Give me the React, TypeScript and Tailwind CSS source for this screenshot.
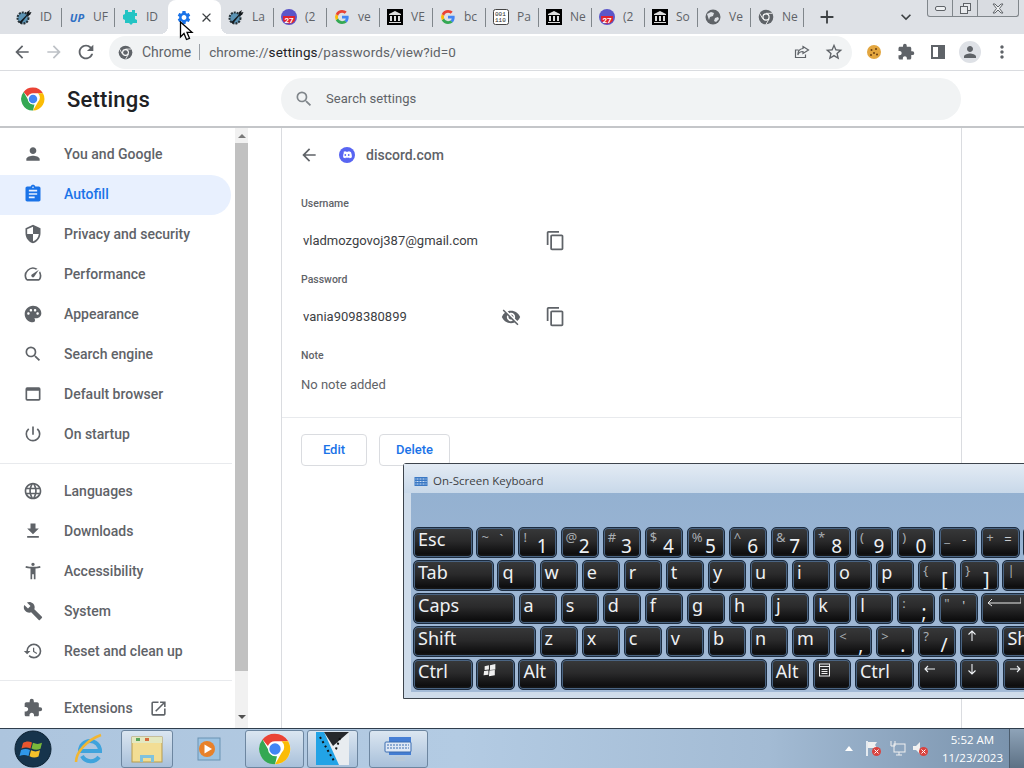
import React from "react";
import {
  MdPerson, MdAssignment, MdSecurity, MdSpeed, MdPalette, MdSearch, MdWebAsset, MdPowerSettingsNew,
  MdLanguage, MdFileDownload, MdAccessibilityNew, MdBuild, MdRestore, MdExtension, MdOpenInNew,
  MdArrowBack, MdArrowForward, MdRefresh, MdContentCopy, MdVisibilityOff, MdAdd, MdClose, MdSettings,
  MdExpandMore, MdStarBorder, MdMoreVert,
} from "react-icons/md";

function ChromeLogo({ size = 24 }: { size?: number }) {
  return (
    <svg width={size} height={size} viewBox="0 0 48 48">
      <circle cx="24" cy="24" r="23" fill="#fff" />
      <path d="M24 1a23 23 0 0 1 19.9 11.5H24a11.5 11.5 0 0 0-10.6 7L5.2 9.9A23 23 0 0 1 24 1z" fill="#ea4335" />
      <path d="M43.9 12.5A23 23 0 0 1 24 47l9.9-17.2a11.5 11.5 0 0 0 0-17.3z" fill="#fbbc05" />
      <path d="M24 47A23 23 0 0 1 5.2 9.9l9.9 17.2A11.5 11.5 0 0 0 27 35z" fill="#34a853" />
      <circle cx="24" cy="24" r="10.5" fill="#fff" />
      <circle cx="24" cy="24" r="8.5" fill="#4285f4" />
    </svg>
  );
}

function GreyChrome({ size = 16 }: { size?: number }) {
  return (
    <svg width={size} height={size} viewBox="0 0 48 48">
      <circle cx="24" cy="24" r="22" fill="#5f6368" />
      <circle cx="24" cy="24" r="11" fill="#fff" />
      <circle cx="24" cy="24" r="7.5" fill="#5f6368" />
      <path d="M24 13h19M14.5 29.500 5 13M33.500 29.500 24 46" stroke="#fff" strokeWidth="2.500" />
    </svg>
  );
}

function GoogleG() {
  return (
    <svg width="16" height="16" viewBox="0 0 48 48">
      <path d="M44 24.500c0-1.500-.1-3-.4-4.500H24v8.500h11.300c-.5 2.700-2 5-4.300 6.500l6.800 5.300C41.800 36.600 44 31 44 24.500z" fill="#4285f4" />
      <path d="M24 45c5.700 0 10.500-1.900 13.800-5.200L31 34.500c-1.900 1.300-4.300 2-7 2-5.400 0-10-3.600-11.600-8.500l-7 5.400C8.800 40.500 15.900 45 24 45z" fill="#34a853" />
      <path d="M12.400 28.500a12.600 12.600 0 0 1 0-8l-7-5.500a21 21 0 0 0 0 19z" fill="#fbbc05" />
      <path d="M24 11.500c3 0 5.800 1 8 3.100l6-6C34.400 5.200 29.600 3 24 3 15.900 3 8.800 7.600 5.400 15l7 5.500C14 15.500 18.600 11.500 24 11.500z" fill="#ea4335" />
    </svg>
  );
}

function Wrench() {
  return (
    <svg width="16" height="16" viewBox="0 0 16 16">
      <circle cx="7" cy="9" r="5.500" fill="#5b93b4" stroke="#263238" strokeWidth="2" strokeDasharray="2 1" />
      <path d="M3 13.500 10.500 6l.5-3 3-2-1 2.500 2.500-.5L14 6l-2.500.5L5 14.500z" fill="#14191d" />
    </svg>
  );
}

function Bank() {
  return (
    <svg width="16" height="16" viewBox="0 0 16 16">
      <rect width="16" height="16" fill="#000" />
      <path d="M2 5 8 2l6 3v1H2zM3 7h2v5H3zM7 7h2v5H7zM11 7h2v5h-2zM2 13h12v1H2z" fill="#ddd" />
    </svg>
  );
}

function Cal() {
  return (
    <svg width="16" height="16" viewBox="0 0 16 16">
      <circle cx="8" cy="8" r="8" fill="#5b56c9" />
      <path d="M2 7h12l-.2 5a7.500 7.500 0 0 1-11.600 0z" fill="#e0232e" />
      <text x="8" y="14" textAnchor="middle" fontSize="8" fontWeight="700" fill="#fff" fontFamily="Roboto">27</text>
    </svg>
  );
}

function Puzzle() {
  return (
    <svg width="16" height="16" viewBox="0 0 16 16">
      <path d="M3 1h3v2h4V1h3v3h2v3h-2v3l2 1v3h-4l-2 2-2-2H3v-3l-2-1V6l2-1z" fill="#23c4c4" />
    </svg>
  );
}

function Numbers() {
  return (
    <svg width="16" height="16" viewBox="0 0 16 16">
      <rect x=".5" y=".5" width="15" height="15" rx="2" fill="#fff" stroke="#444" />
      <text x="2" y="7" fontSize="6" fill="#222" fontFamily="Liberation Mono">001</text>
      <text x="2" y="13" fontSize="6" fill="#222" fontFamily="Liberation Mono">110</text>
    </svg>
  );
}

function Globe() {
  return (
    <svg width="16" height="16" viewBox="0 0 16 16">
      <circle cx="8" cy="8" r="7.500" fill="#5f6368" />
      <path d="M2 5l4-2 3 1-1 3-3 1-1 3zM10 9l3-1 1 2-3 3-2-1z" fill="#dee1e6" />
    </svg>
  );
}

const tabs: { icon: React.ReactNode; text: string; div: boolean; active?: boolean }[] = [
  { icon: <Wrench />, text: "ID", div: true },
  { icon: <span className="text-[11px] font-bold italic text-[#2f6fc4] leading-none">UP</span>, text: "UF", div: true },
  { icon: <Puzzle />, text: "ID", div: false },
  { icon: <MdSettings size={17} className="text-[#1a73e8]" />, text: "", div: false, active: true },
  { icon: <Wrench />, text: "La", div: true },
  { icon: <Cal />, text: "(2", div: true },
  { icon: <GoogleG />, text: "ve", div: true },
  { icon: <Bank />, text: "VE", div: true },
  { icon: <GoogleG />, text: "bc", div: true },
  { icon: <Numbers />, text: "Pa", div: true },
  { icon: <Bank />, text: "Ne", div: true },
  { icon: <Cal />, text: "(2", div: true },
  { icon: <Bank />, text: "So", div: true },
  { icon: <Globe />, text: "Ve", div: true },
  { icon: <GreyChrome />, text: "Ne", div: true },
];

function Tab({ t }: { t: (typeof tabs)[number] }) {
  if (t.active) {
    return (
      <div className="relative flex h-[34px] w-[53px] shrink-0 items-center rounded-t-lg bg-white pl-[8px] pt-[1px]">
        <div className="absolute -left-2 bottom-0 h-2 w-2 bg-[radial-gradient(circle_at_0_0,transparent_8px,white_8px)]" />
        <div className="absolute -right-2 bottom-0 h-2 w-2 bg-[radial-gradient(circle_at_100%_0,transparent_8px,white_8px)]" />
        <span className="flex w-[16px] items-center justify-center">{t.icon}</span>
        <MdClose size={15} className="ml-[7px] text-[#3c4043]" />
      </div>
    );
  }
  return (
    <div className="relative flex h-[34px] w-[53px] shrink-0 items-center pl-[7px]">
      <span className="flex w-[16px] shrink-0 items-center justify-center">{t.icon}</span>
      <span className="ml-[8px] whitespace-nowrap font-['Open_Sans',sans-serif] text-[12px] text-[#5f6368]">
        {t.text}
      </span>
      {t.div && <span className="absolute right-0 top-[8px] h-[19px] w-px bg-[#80868b]" />}
    </div>
  );
}

function TabStrip() {
  return (
    <div className="relative flex h-[34px] items-start bg-[#dee1e6] pl-[9px]">
      {tabs.map((t, i) => (
        <Tab key={i} t={t} />
      ))}
      <MdAdd size={22} className="ml-[12px] mt-[6px] text-[#3c4043]" />
      <MdExpandMore size={20} className="ml-[58px] mt-[7px] text-[#3c4043]" />
      <div className="ml-[11px] flex h-[17px] w-[92px] items-center rounded-b-[3px] border border-t-0 border-[#80868b] bg-[#d9dce1]">
        <span className="flex h-full w-[25px] items-center justify-center border-r border-[#80868b]">
          <span className="h-[5px] w-[11px] rounded-[2px] border border-[#5f6368] bg-[#eef0f2]" />
        </span>
        <span className="flex h-full w-[25px] items-center justify-center border-r border-[#80868b]">
          <svg width="11" height="11" viewBox="0 0 11 11" fill="#e8eaed" stroke="#5f6368"><rect x="3.500" y=".5" width="7" height="7" /><rect x=".5" y="3.500" width="7" height="7" /></svg>
        </span>
        <span className="flex h-full flex-1 items-center justify-center">
          <svg width="12" height="11" viewBox="0 0 12 11" fill="#eef0f2" stroke="#5f6368"><path d="M1 1h2l3 3 3-3h2L7.500 5.500 11 10H9L6 7l-3 3H1l3.500-4.500z" /></svg>
        </span>
      </div>
    </div>
  );
}

function Toolbar() {
  return (
    <div className="flex h-[37px] items-center border-b border-[#dadce0] bg-white text-[#5f6368]">
      <MdArrowBack size={20} className="ml-[12px] text-[#5f6368]" />
      <MdArrowForward size={20} className="ml-[12px] text-[#bdc1c6]" />
      <MdRefresh size={22} className="ml-[11px] text-[#5f6368]" />
      <div className="ml-[12px] flex h-[33px] w-[743px] items-center rounded-full bg-[#f1f3f4] pl-[9px] pr-[8px] font-['Roboto',sans-serif] text-[14px]">
        <GreyChrome size={15} />
        <span className="ml-[9px] text-[#5f6368]">Chrome</span>
        <span className="ml-[8px] h-[16px] w-px bg-[#9aa0a6]" />
        <span className="ml-[9px] whitespace-nowrap text-[13.500px] tracking-[.1px] text-[#5f6368]">
          chrome://<span className="text-[#202124]">settings</span>/passwords/view?id=0
        </span>
        <svg className="ml-auto" width="16" height="16" viewBox="0 0 16 16" fill="none" stroke="#5f6368" strokeWidth="1.200">
          <path d="M9 2.500 14.500 6 9 9.500V7.500C6 7.500 4.500 9 3.800 11 3.800 7 6 4.800 9 4.500zM11.500 10.500v3H1.500V6h3" />
        </svg>
        <MdStarBorder size={20} className="ml-[14px] text-[#5f6368]" />
      </div>
      <svg className="ml-[14px]" width="16" height="16" viewBox="0 0 16 16">
        <circle cx="8" cy="8" r="7" fill="#e3a63f" />
        <circle cx="5.500" cy="6" r="1" fill="#6b3f12" /><circle cx="10" cy="5" r="1" fill="#6b3f12" /><circle cx="8" cy="9" r="1" fill="#6b3f12" /><circle cx="11" cy="10.500" r="1" fill="#6b3f12" /><circle cx="5" cy="11" r="1" fill="#6b3f12" />
      </svg>
      <MdExtension size={18} className="ml-[15px] text-[#5f6368]" />
      <span className="ml-[16px] flex h-[14px] w-[14px] justify-end border-2 border-[#5f6368]"><span className="h-full w-[5px] bg-[#5f6368]" /></span>
      <span className="ml-[14px] flex h-[22px] w-[22px] items-center justify-center rounded-full bg-[#dee1e6]"><MdPerson size={18} className="text-[#5f6368]" /></span>
      <MdMoreVert size={20} className="ml-[11px] text-[#5f6368]" />
    </div>
  );
}

function Header() {
  return (
    <div className="flex h-[57px] items-center border-b-2 border-[#c4c6c9] bg-white pt-[1px]">
      <div className="ml-[21px]"><ChromeLogo /></div>
      <span className="ml-[22px] font-['Roboto',sans-serif] text-[22px] font-medium tracking-[.2px] text-[#202124]">Settings</span>
      <div className="ml-[131px] flex h-[42px] w-[680px] items-center rounded-full bg-[#f1f3f4] pl-[13px] text-[#5f6368]">
        <MdSearch size={20} className="text-[#80868b]" />
        <span className="ml-[12px] font-['Roboto',sans-serif] text-[13px] tracking-[.05px]">Search settings</span>
      </div>
    </div>
  );
}

const nav1 = [
  { i: MdPerson, t: "You and Google" },
  { i: MdAssignment, t: "Autofill", a: true },
  { i: MdSecurity, t: "Privacy and security" },
  { i: MdSpeed, t: "Performance" },
  { i: MdPalette, t: "Appearance" },
  { i: MdSearch, t: "Search engine" },
  { i: MdWebAsset, t: "Default browser" },
  { i: MdPowerSettingsNew, t: "On startup" },
];
const nav2 = [
  { i: MdLanguage, t: "Languages" },
  { i: MdFileDownload, t: "Downloads" },
  { i: MdAccessibilityNew, t: "Accessibility" },
  { i: MdBuild, t: "System" },
  { i: MdRestore, t: "Reset and clean up" },
];

function NavRow({ n }: { n: { i: React.ComponentType<{ size?: number; className?: string }>; t: string; a?: boolean } }) {
  const Icon = n.i;
  return (
    <div className={n.a ? "flex h-10 w-[231px] items-center rounded-r-full bg-[#e8f0fe] pb-[2px] pl-[23px] text-[#1a73e8]" : "flex h-10 items-center pb-[2px] pl-[23px] text-[#5f6368]"}>
      <Icon size={20} />
      <span className="ml-[21px] text-[14px] font-medium">{n.t}</span>
    </div>
  );
}

function Sidebar() {
  return (
    <div className="flex w-[248px] shrink-0 font-['Roboto',sans-serif]">
      <div className="w-[235px] pt-[7px]">
        {nav1.map((n) => <NavRow key={n.t} n={n} />)}
        <div className="mb-[8px] mt-[8px] w-[232px] border-t border-[#e8eaed]" />
        {nav2.map((n) => <NavRow key={n.t} n={n} />)}
        <div className="mb-[8px] mt-[8px] w-[232px] border-t border-[#e8eaed]" />
        <div className="flex h-10 items-center pb-[2px] pl-[23px] text-[#5f6368]">
          <MdExtension size={20} />
          <span className="ml-[21px] text-[14px] font-medium">Extensions</span>
          <MdOpenInNew size={19} className="ml-[16px]" />
        </div>
      </div>
      <div className="flex w-[13px] flex-col items-center bg-[#f1f1f1]">
        <span className="mt-[6px] h-0 w-0 border-x-[4px] border-b-[4px] border-x-transparent border-b-[#7a7a7a]" />
        <span className="mt-[5px] h-[528px] w-[13px] bg-[#c1c1c1]" />
        <span className="mt-[44px] h-0 w-0 border-x-[4px] border-t-[4px] border-x-transparent border-t-[#505050]" />
      </div>
    </div>
  );
}

function DiscordIcon() {
  return (
    <svg width="16" height="16" viewBox="0 0 16 16">
      <circle cx="8" cy="8" r="8" fill="#5865f2" />
      <path d="M4 5.200C5 4.500 6 4.300 6.500 4.300l.3.5h2.400l.3-.5c.5 0 1.500.2 2.500.9.700 1.500 1 3.200.9 5-.8.600-1.600.9-2.300 1l-.5-.8c-1 .3-2.200.3-3.200 0l-.5.8c-.7-.1-1.500-.4-2.300-1-.1-1.800.2-3.500.9-5z" fill="#fff" />
      <circle cx="6.300" cy="8" r=".9" fill="#5865f2" />
      <circle cx="9.700" cy="8" r=".9" fill="#5865f2" />
    </svg>
  );
}

function Main() {
  const label = "flex h-4 items-center pl-[19px] text-[10.500px] font-medium text-[#5f6368]";
  return (
    <div className="ml-[33px] h-[600px] w-[681px] shrink-0 border-x border-[#dadce0] font-['Roboto',sans-serif]">
      <div className="flex h-[54px] items-center pl-[17px]">
        <MdArrowBack size={20} className="text-[#5f6368]" />
        <span className="ml-[20px]"><DiscordIcon /></span>
        <span className="ml-[11px] text-[14px] font-medium text-[#5f6368]">discord.com</span>
      </div>
      <div className={`mt-[14px] ${label}`}>Username</div>
      <div className="mt-[9px] flex h-10 items-center pl-[21px]">
        <span className="w-[234px] text-[13px] text-[#3c4043]">vladmozgovoj387@gmail.com</span>
        <MdContentCopy size={21} className="-mt-[2px] ml-[8px] text-[#5f6368]" />
      </div>
      <div className={`mt-[11px] ${label}`}>Password</div>
      <div className="mt-[9px] flex h-10 items-center pl-[21px]">
        <span className="w-[198px] text-[13px] text-[#3c4043]">vania9098380899</span>
        <MdVisibilityOff size={20} className="text-[#5f6368]" />
        <MdContentCopy size={21} className="-mt-[2px] ml-[24px] text-[#5f6368]" />
      </div>
      <div className={`mt-[11px] ${label}`}>Note</div>
      <div className="mt-[11px] flex h-5 items-center pl-[19px] text-[13px] text-[#5f6368]">No note added</div>
      <div className="mt-[22px] border-t border-[#e8eaed]" />
      <div className="mt-[16px] flex gap-[12px] pl-[19px] text-[13px] font-medium text-[#1a73e8]">
        <span className="flex h-[32px] w-[66px] items-center justify-center rounded border border-[#dadce0]">Edit</span>
        <span className="flex h-[32px] w-[71px] items-center justify-center rounded border border-[#dadce0]">Delete</span>
      </div>
    </div>
  );
}

type K = { t?: string; top?: string; bot?: string; w?: string; g?: React.ReactNode; s?: string };

function KeyArrow({ d }: { d: string }) {
  return (
    <svg width="12" height="12" viewBox="0 0 12 12" fill="none" stroke="#eef1f4" strokeWidth="1.100">
      <path d={d} />
    </svg>
  );
}

const rows: K[][] = [
  [{ t: "Esc", w: "w-[59.500px]" }, { top: "~", s: "`" }, { top: "!", bot: "1" }, { top: "@", bot: "2" }, { top: "#", bot: "3" }, { top: "$", bot: "4" }, { top: "%", bot: "5" }, { top: "^", bot: "6" }, { top: "&", bot: "7" }, { top: "*", bot: "8" }, { top: "(", bot: "9" }, { top: ")", bot: "0" }, { top: "_", s: "-" }, { top: "+", s: "=" }, { t: "", w: "w-[60px]" }],
  [{ t: "Tab", w: "w-[80.600px]" }, ...["q", "w", "e", "r", "t", "y", "u", "i", "o", "p"].map((t) => ({ t })), { top: "{", bot: "[" }, { top: "}", bot: "]" }, { top: "|", bot: "\\" }],
  [{ t: "Caps", w: "w-[101.700px]" }, ...["a", "s", "d", "f", "g", "h", "j", "k", "l"].map((t) => ({ t })), { top: ":", bot: ";" }, { top: '"', s: "'" }, { g: <svg width="34" height="10" viewBox="0 0 34 10" fill="none" stroke="#e8e8e8"><path d="M34 .5V6H1M5 2 1 6l4 3" /></svg>, w: "w-[80px]" }],
  [{ t: "Shift", w: "w-[122.700px]" }, ...["z", "x", "c", "v", "b", "n", "m"].map((t) => ({ t })), { top: "<", bot: "," }, { top: ">", bot: "." }, { top: "?", bot: "/" }, { g: <KeyArrow d="M6 11V1M2.500 4.500 6 1l3.500 3.500" /> }, { t: "Shift", w: "w-[60px]" }],
  [{ t: "Ctrl", w: "w-[59.500px]" }, { g: <svg width="16" height="15" viewBox="0 0 14 14" fill="#eee"><path d="M2 3l4-1v4l-4 .5zM7 2l5-1v5l-5 .5zM1.500 7.500l4-.5v4l-4.500.5zM6.500 7l5-.5v5l-5.500.8z" /></svg> }, { t: "Alt" }, { t: "", w: "w-[206.400px]" }, { t: "Alt" }, { g: <svg width="11" height="14" viewBox="0 0 11 13" fill="none" stroke="#eee"><rect x=".5" y=".5" width="10" height="12" /><path d="M.5 3h10M2.500 6h6M2.500 8h6M2.500 10h6" /></svg> }, { t: "Ctrl", w: "w-[59.500px]" }, { g: <KeyArrow d="M11 6H1M4 3 1 6l3 3" /> }, { g: <KeyArrow d="M6 1v10M2.500 7.500 6 11l3.500-3.500" /> }, { g: <KeyArrow d="M1 6h10M8 3l3 3-3 3" /> }],
];

function Key({ k }: { k: K }) {
  return (
    <div className={`${k.w ?? "w-[38.200px]"} relative h-[31px] shrink-0 overflow-hidden rounded-[5px] border border-[#1c2c40] bg-[linear-gradient(to_bottom,#38393a_0%,#2a2a2b_45%,#0e0e0f_88%,#191a1b_100%)] font-['Noto_Sans',sans-serif] text-[#eef1f4] shadow-[inset_0_0_0_1px_#4a6482]`}>
      {k.t && <span className="absolute left-[4px] top-[-1px] text-[18px] leading-[24px]">{k.t}</span>}
      {k.g && <span className="absolute left-[5px] top-[3px]">{k.g}</span>}
      {k.top && <span className="absolute left-[4px] top-[1px] text-[13px] leading-[16px] text-[#a8adb2]">{k.top}</span>}
      {k.bot && <span className="absolute bottom-[0px] right-[8px] text-[19px] leading-[21px]">{k.bot}</span>}
      {k.s && <span className="absolute left-[22px] top-[4px] text-[13px] leading-[14px] text-[#c9cdd1]">{k.s}</span>}
    </div>
  );
}

function Keyboard() {
  return (
    <div className="absolute left-[403px] top-[463px] h-[236px] w-[680px] rounded-t-[3px] border border-[#3d444c] bg-[#cfdcea]">
      <div className="flex h-[29px] items-center bg-[linear-gradient(to_bottom,#e3ebf4,#c8d8e9)] pl-[10px] pt-[5px] font-['Open_Sans',sans-serif] text-[11.500px] text-[#3c4043]">
        <svg width="14" height="9" viewBox="0 0 13 9"><rect width="13" height="9" fill="#3a78c4" /><path d="M1 2h11M1 4.500h11M1 7h11" stroke="#cfe0f5" strokeDasharray="1 .5" /></svg>
        <span className="ml-[5px]">On-Screen Keyboard</span>
      </div>
      <div className="ml-[7px] h-[199px] bg-[linear-gradient(to_bottom,#94b1d1,#a3bad6)] pl-[2px] pt-[34px]">
        <div className="flex flex-col gap-[2px]">
          {rows.map((r, i) => (
            <div key={i} className="flex gap-[3.900px]">
              {r.map((k, j) => <Key key={j} k={k} />)}
            </div>
          ))}
        </div>
      </div>
    </div>
  );
}

function TaskBtn({ w, ml, children }: { w: string; ml: string; children: React.ReactNode }) {
  return (
    <div className={`${w} ${ml} flex h-[38px] shrink-0 items-center justify-center rounded-[3px] border border-[#6d86a0] bg-[linear-gradient(to_bottom,#dbe6f1,#a8c0da)]`}>
      {children}
    </div>
  );
}

function Taskbar() {
  return (
    <div className="flex h-[40px] shrink-0 items-center border-t border-[#2f3d4c] bg-[linear-gradient(to_right,#adc5de_0%,#b3cbe3_45%,#a3bbd4_75%,#7891ab_100%)]">
      <svg className="ml-[14px] shrink-0" width="38" height="38" viewBox="0 0 38 38">
        <circle cx="19" cy="19" r="18" fill="#16344c" stroke="#0d2233" />
        <path d="M9 13c3-2 6-2 9-.5l-1.500 6c-3-1.500-6-1.500-9 0z" fill="#e8552e" />
        <path d="M19 12.800c3 1.500 6 1.500 9 0l-1.500 6c-3 1.500-6 1.200-9-.2z" fill="#7ab83a" />
        <path d="M7 20c3-1.500 6-1.500 9 0l-1.500 6c-3-1.500-6-1.500-9 0z" fill="#2f97e8" />
        <path d="M17 20.300c3 1.500 6 1.500 9 0L24.500 26.500c-3 1.500-6 1.300-9-.2z" fill="#f4c02a" />
      </svg>
      <svg className="ml-[21px] shrink-0" width="32" height="34" viewBox="0 0 32 34" fill="none">
        <path d="M7 19a10 10 0 1 1 20 0H7zM9 24a10 10 0 0 0 17 1" stroke="#3fa3dc" strokeWidth="4" />
        <path d="M3 30C3 20 14 8 28 3" stroke="#f2b632" strokeWidth="2.500" />
      </svg>
      <TaskBtn w="w-[52px]" ml="ml-[16px]">
        <svg width="32" height="28" viewBox="0 0 32 28"><rect x="1" y="2" width="30" height="25" fill="#f2dd94" stroke="#b79b4c" /><rect x="1" y="2" width="30" height="6" fill="#e4e8c0" /><rect x="5" y="3" width="4" height="3" fill="#5aa55a" /><rect x="14" y="3" width="4" height="3" fill="#d66a3d" /><path d="M9 27v-7h14v7h-3v-4h-8v4z" fill="#7fc2dd" /></svg>
      </TaskBtn>
      <svg className="ml-[22px] shrink-0" width="26" height="26" viewBox="0 0 26 26">
        <rect x="3" y="2" width="22" height="22" fill="#9cc3e2" stroke="#6b93b3" /><circle cx="12" cy="13" r="8" fill="#e8812a" /><path d="M9.500 8.500 17 13l-7.500 4.500z" fill="#fff" />
      </svg>
      <TaskBtn w="w-[59px]" ml="ml-[24px]"><ChromeLogo size={32} /></TaskBtn>
      <TaskBtn w="w-[51px]" ml="ml-[3px]">
        <svg width="33" height="33" viewBox="0 0 33 33"><path d="M0 0h33v33H0z" fill="#e8ecf0" /><path d="M0 0h8l15 33H0z" fill="#22a3e6" /><path d="M8 0h25L17 14z" fill="#26282b" /><path d="M4 5l14 24M24 6l-5 14" stroke="#111" strokeWidth="2" strokeDasharray="2 3" /></svg>
      </TaskBtn>
      <TaskBtn w="w-[59px]" ml="ml-[11px]">
        <svg width="32" height="32" viewBox="0 0 32 32"><path d="M6 4h22v18H6z" fill="#2f6fd0" opacity=".85" /><rect x="2" y="9" width="26" height="10" rx="1" fill="#dfe8f5" stroke="#3a6cb0" /><path d="M4 12h22M4 15h22" stroke="#3a6cb0" strokeDasharray="2 1" /><path d="M12 24h10v4H12z" fill="#b8c8d8" /></svg>
      </TaskBtn>
      <div className="ml-auto flex h-full items-center">
        <span className="h-0 w-0 border-x-[4px] border-b-[5px] border-x-transparent border-b-white" />
        <svg className="ml-[12px]" width="17" height="17" viewBox="0 0 17 17"><path d="M2 1v15" stroke="#fff" strokeWidth="1.500" /><path d="M3 2h9l-2 3 2 3H3z" fill="#f0f0f0" /><circle cx="11.500" cy="11.500" r="4.500" fill="#d9433f" /><path d="M9.500 9.500l4 4m0-4-4 4" stroke="#fff" /></svg>
        <svg className="ml-[7px]" width="17" height="17" viewBox="0 0 17 17" fill="none" stroke="#f0f0f0"><rect x="5" y="4" width="11" height="8" /><path d="M10 12v3M7 15h6M2 1v5h4V1" /></svg>
        <svg className="ml-[6px]" width="17" height="17" viewBox="0 0 17 17"><path d="M1 6h3l4-4v12L4 10H1z" fill="#f0f0f0" /><circle cx="11.500" cy="11.500" r="4.500" fill="#d9433f" /><path d="M9.500 9.500l4 4m0-4-4 4" stroke="#fff" /></svg>
        <div className="ml-[13px] flex flex-col items-center font-['Open_Sans',sans-serif] text-[11.500px] leading-[18px] text-white">
          <span>5:52 AM</span>
          <span>11/23/2023</span>
        </div>
        <div className="ml-[6px] h-full w-[15px] border-l border-[#4c5d6e] bg-[linear-gradient(to_bottom,#8ea3b8,#5d7185)]" />
      </div>
    </div>
  );
}

export default function App() {
  return (
    <div className="relative flex h-[768px] w-[1024px] flex-col overflow-hidden bg-white">
      <TabStrip />
      <Toolbar />
      <Header />
      <div className="flex h-[600px] shrink-0 overflow-hidden">
        <Sidebar />
        <Main />
      </div>
      <Taskbar />
      <Keyboard />
      <svg className="absolute left-[179px] top-[21px]" width="15" height="21" viewBox="0 0 15 21">
        <path d="M1.500 1v15l3.500-3.500 2.500 6 3-1.200-2.500-6H13z" fill="#fff" stroke="#000" strokeWidth="1.300" />
      </svg>
    </div>
  );
}
